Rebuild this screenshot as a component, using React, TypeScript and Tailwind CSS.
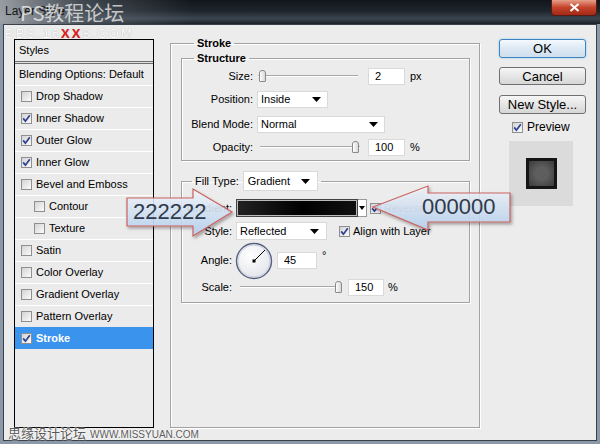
import React from "react";

const F = "font-['Liberation_Sans',Arial,sans-serif]";

function Check({ on }: { on?: boolean }) {
  return (
    <span className="flex h-[11px] w-[11px] shrink-0 items-center justify-center border border-[#8e8f8f] bg-[linear-gradient(135deg,#d4d4d4,#fbfbfb)]">
      {on && (
        <svg width="9" height="9" viewBox="0 0 9 9">
          <path d="M1.2 4.4 L3.4 7.2 L7.8 1.2" stroke="#2c3f91" strokeWidth="1.7" fill="none" />
        </svg>
      )}
    </span>
  );
}

function Caret() {
  return (
    <svg width="9" height="5" viewBox="0 0 9 5">
      <path d="M0 0 H9 L4.5 5 Z" fill="#000" />
    </svg>
  );
}

function Thumb() {
  return <span className="block h-[12px] w-[7px] rounded-t-[3px] rounded-b-[1px] border border-[#8a8a8a] bg-[linear-gradient(90deg,#fdfdfd,#d8d8d8)]" />;
}

const styles = [
  { name: "Drop Shadow" },
  { name: "Inner Shadow", on: true },
  { name: "Outer Glow", on: true },
  { name: "Inner Glow", on: true },
  { name: "Bevel and Emboss" },
  { name: "Contour", sub: true },
  { name: "Texture", sub: true },
  { name: "Satin" },
  { name: "Color Overlay" },
  { name: "Gradient Overlay" },
  { name: "Pattern Overlay" },
];

export default function App() {
  return (
    <div className={`relative h-[444px] w-[600px] overflow-hidden bg-[#8a98a8] text-[11px] leading-[13px] text-black ${F}`}>
      {/* TITLE BAR */}
      <div className="relative h-[24px] bg-[linear-gradient(180deg,#11161c_0%,#1d242c_45%,#3c4650_78%,#1a2027_100%)]">
        <div className="absolute inset-0 bg-[linear-gradient(90deg,rgba(175,180,186,0.85)_0%,rgba(120,128,136,0.45)_14%,rgba(0,0,0,0)_32%)]" />
        <span className="absolute left-[5px] top-[5px] text-[12px] text-[#151515]">Layer Style</span>
        <div className="absolute right-[3px] top-0 flex h-[16px] w-[46px] items-center justify-center rounded-b-[4px] border border-t-0 border-[#5a1a12] bg-[linear-gradient(180deg,#e7a08a,#c5422a_50%,#a12a17)]">
          <svg width="11" height="9" viewBox="0 0 11 9">
            <path d="M1.5 1 L9.5 8 M9.5 1 L1.5 8" stroke="#fff" strokeWidth="2" />
          </svg>
        </div>
      </div>

      {/* BODY */}
      <div className="mx-[3px] flex h-[417px] items-start border border-[#3a4048] bg-[#ececec] pl-[10px] pt-[14px]">
        {/* STYLE LIST */}
        <div className="flex h-[389px] w-[140px] shrink-0 flex-col border border-black bg-[#ebebeb]">
          <div className="flex h-[21px] items-center pl-[4px]">Styles</div>
          <div className="h-[3px] border-y border-[#6d6d6d] bg-[#e0e0e0]" />
          <div className="flex h-[21px] items-center pl-[4px]">Blending Options: Default</div>
          {styles.map((s) => (
            <div
              key={s.name}
              className={`flex h-[22px] items-center gap-[4px] border-t border-white ${s.sub ? "pl-[19px]" : "pl-[6px]"}`}
            >
              <Check on={s.on} />
              <span>{s.name}</span>
            </div>
          ))}
          <div className="flex h-[22px] items-center gap-[4px] bg-[#3a93ec] pl-[6px] font-bold text-white">
            <Check on />
            <span>Stroke</span>
          </div>
        </div>

        {/* STROKE GROUP */}
        <fieldset className="-mt-[2px] ml-[16px] h-[391px] w-[310px] shrink-0 border border-[#a3a3a3] pl-[10px] pr-[9px] shadow-[inset_1px_1px_0_#fff,1px_1px_0_#fff]">
          <legend className="ml-[13px] px-[3px] font-bold">Stroke</legend>

          {/* STRUCTURE */}
          <fieldset className="mt-[2px] border border-[#a3a3a3] pb-[3px] shadow-[inset_1px_1px_0_#fff,1px_1px_0_#fff]">
            <legend className="ml-[12px] px-[3px] font-bold">Structure</legend>

            <div className="flex h-[22px] items-center">
              <span className="w-[71px] text-right">Size:</span>
              <div className="relative ml-[5px] flex h-[12px] w-[100px] items-center">
                <div className="h-[2px] w-full border-b border-white bg-[#a8a8a8]" />
                <span className="absolute left-[1px] top-0"><Thumb /></span>
              </div>
              <span className="ml-[10px] flex h-[17px] w-[37px] items-center border border-[#d9d9d9] bg-white pl-[6px]">2</span>
              <span className="ml-[5px]">px</span>
            </div>

            <div className="flex h-[24px] items-center">
              <span className="w-[71px] text-right">Position:</span>
              <div className="ml-[4px] flex h-[17px] w-[71px] items-center justify-between border border-[#d9d9d9] bg-white pl-[3px] pr-[6px]">
                <span>Inside</span>
                <Caret />
              </div>
            </div>

            <div className="flex h-[26px] items-center">
              <span className="w-[71px] text-right">Blend Mode:</span>
              <div className="ml-[4px] flex h-[17px] w-[128px] items-center justify-between border border-[#d9d9d9] bg-white pl-[3px] pr-[6px]">
                <span>Normal</span>
                <Caret />
              </div>
            </div>

            <div className="flex h-[20px] items-center">
              <span className="w-[71px] text-right">Opacity:</span>
              <div className="relative ml-[7px] flex h-[12px] w-[100px] items-center">
                <div className="h-[2px] w-full border-b border-white bg-[#a8a8a8]" />
                <span className="absolute right-[1px] top-0"><Thumb /></span>
              </div>
              <span className="ml-[8px] flex h-[17px] w-[37px] items-center border border-[#d9d9d9] bg-white pl-[6px]">100</span>
              <span className="ml-[5px]">%</span>
            </div>
          </fieldset>

          {/* FILL TYPE */}
          <fieldset className="mt-[10px] border border-[#a3a3a3] pb-[6px] shadow-[inset_1px_1px_0_#fff,1px_1px_0_#fff]">
            <legend className="ml-[10px] flex items-center px-[3px]">
              <span>Fill Type:</span>
              <span className="ml-[4px] flex h-[20px] w-[75px] items-center justify-between border border-[#d9d9d9] bg-white pl-[4px] pr-[7px]">
                <span>Gradient</span>
                <Caret />
              </span>
            </legend>

            <div className="mt-[6px] flex h-[22px] items-center">
              <span className="w-[50px] text-right">Gradient:</span>
              <div className="ml-[4px] flex h-[18px] items-center">
                <span className="h-[18px] w-[122px] border border-[#444] bg-[linear-gradient(90deg,#222222,#000000_55%,#111111)] shadow-[inset_0_0_0_1px_#bbb]" />
                <span className="flex h-[18px] w-[9px] items-center justify-center border border-l-0 border-[#999] bg-white">
                  <svg width="6" height="4" viewBox="0 0 6 4"><path d="M0 0 H6 L3 4 Z" fill="#000" /></svg>
                </span>
              </div>
              <span className="ml-[3px]"><Check on /></span>
              <span className="ml-[3px] text-[#9a9a9a]">Reverse</span>
            </div>

            <div className="flex h-[24px] items-center">
              <span className="w-[50px] text-right">Style:</span>
              <div className="ml-[4px] flex h-[18px] w-[91px] items-center justify-between border border-[#d9d9d9] bg-white pl-[3px] pr-[7px]">
                <span>Reflected</span>
                <Caret />
              </div>
              <span className="ml-[12px]"><Check on /></span>
              <span className="ml-[3px]">Align with Layer</span>
            </div>

            <div className="flex h-[35px] items-center">
              <span className="w-[50px] text-right">Angle:</span>
              <svg className="ml-[3px]" width="38" height="38" viewBox="0 0 38 38">
                <defs>
                  <radialGradient id="dial" cx="40%" cy="35%" r="70%">
                    <stop offset="0" stopColor="#ffffff" />
                    <stop offset="1" stopColor="#e2e4ea" />
                  </radialGradient>
                </defs>
                <circle cx="19" cy="19" r="17.5" fill="url(#dial)" stroke="#56607e" strokeWidth="1.4" />
                <circle cx="19" cy="19" r="16" fill="none" stroke="#c2c8d8" strokeWidth="0.8" />
                <path d="M19 19 L30 8" stroke="#000" strokeWidth="1" />
                <rect x="17.5" y="17.5" width="3" height="3" fill="#000" />
              </svg>
              <span className="ml-[4px] flex h-[17px] w-[40px] items-center border border-[#d9d9d9] bg-white pl-[6px]">45</span>
              <span className="mb-[10px] ml-[5px]">°</span>
            </div>

            <div className="flex h-[18px] items-center">
              <span className="w-[50px] text-right">Scale:</span>
              <div className="relative ml-[8px] flex h-[12px] w-[102px] items-center">
                <div className="h-[2px] w-full border-b border-white bg-[#a8a8a8]" />
                <span className="absolute right-[0px] top-0"><Thumb /></span>
              </div>
              <span className="ml-[6px] flex h-[17px] w-[36px] items-center border border-[#d9d9d9] bg-white pl-[6px]">150</span>
              <span className="ml-[4px]">%</span>
            </div>
          </fieldset>
        </fieldset>

        {/* BUTTONS */}
        <div className="ml-[19px] flex w-[87px] shrink-0 flex-col text-[13px]">
          <button className="flex h-[19px] items-center justify-center rounded-[3px] border border-[#3c84c0] bg-[linear-gradient(180deg,#f4f9fd,#dde9f4_50%,#cfdfee)] shadow-[0_0_2px_#7fc0ee]">
            OK
          </button>
          <button className="mt-[9px] flex h-[18px] items-center justify-center rounded-[3px] border border-[#707070] bg-[linear-gradient(180deg,#f6f6f6,#e6e6e6_50%,#d6d6d6)]">
            Cancel
          </button>
          <button className="mt-[10px] flex h-[19px] items-center justify-center rounded-[3px] border border-[#707070] bg-[linear-gradient(180deg,#f6f6f6,#e6e6e6_50%,#d6d6d6)]">
            New Style...
          </button>
          <div className="mt-[7px] flex h-[13px] items-center gap-[4px] pl-[13px]">
            <Check on />
            <span className="text-[12px]">Preview</span>
          </div>
          <div className="ml-[10px] mt-[7px] flex h-[65px] w-[64px] items-center justify-center bg-[#dbdbdb]">
            <div className="h-[31px] w-[31px] border-[3px] border-[#151515] bg-[radial-gradient(circle,#5e5e5e_35%,#3a3a3a_100%)]" />
          </div>
        </div>
      </div>

      {/* WATERMARKS */}
      <div className="absolute left-[20px] top-[1px] font-['Noto_Sans_CJK_SC',sans-serif] text-[20px] leading-[24px] text-white/70">PS教程论坛</div>
      <div className="absolute left-[5px] top-[27px] text-[13px] leading-[14px] tracking-[2px] text-white [text-shadow:0_0_1px_#999]">
        BBS.16<span className="font-bold text-[#e21f1f]">XX</span>8.COM
      </div>
      <div className="absolute left-[8px] top-[424px] flex items-end text-[#5a5a5a] [text-shadow:0_0_2px_#fff,0_0_1px_#fff]">
        <span className="font-['Noto_Sans_CJK_SC',sans-serif] text-[13px] leading-[17px]">思缘设计论坛</span>
        <span className="ml-[4px] text-[10px] leading-[13px]">WWW.MISSYUAN.COM</span>
      </div>

      {/* ANNOTATION ARROWS */}
      <div className="absolute left-[124px] top-[185px] h-[56px] w-[116px]">
        <svg className="absolute inset-0" width="116" height="56" viewBox="0 0 116 56">
          <defs>
            <linearGradient id="ab" x1="0" y1="0" x2="0" y2="1">
              <stop offset="0" stopColor="#f6f9fd" stopOpacity="0.85" />
              <stop offset="1" stopColor="#b4d0ef" stopOpacity="0.9" />
            </linearGradient>
            <filter id="sh" x="-10%" y="-10%" width="130%" height="140%">
              <feDropShadow dx="1.5" dy="2" stdDeviation="1.5" floodColor="#000" floodOpacity="0.35" />
            </filter>
          </defs>
          <path d="M3 13 H69 V4 L108 27 L69 51 V41 H3 Z" fill="url(#ab)" stroke="#c9625f" strokeWidth="1.2" filter="url(#sh)" />
        </svg>
        <span className="absolute left-[9px] top-[13px] text-[22px] leading-[28px] text-[#2f3a4a]">222222</span>
      </div>

      <div className="absolute left-[370px] top-[182px] h-[54px] w-[146px]">
        <svg className="absolute inset-0" width="146" height="54" viewBox="0 0 146 54">
          <defs>
            <linearGradient id="ab2" x1="0" y1="0" x2="0" y2="1">
              <stop offset="0" stopColor="#f6f9fd" stopOpacity="0.75" />
              <stop offset="1" stopColor="#b4d0ef" stopOpacity="0.9" />
            </linearGradient>
            <filter id="sh2" x="-10%" y="-10%" width="130%" height="140%">
              <feDropShadow dx="1.5" dy="2" stdDeviation="1.5" floodColor="#000" floodOpacity="0.35" />
            </filter>
          </defs>
          <path d="M3 25 L58 4 V11 H140 V40 H58 V48 Z" fill="url(#ab2)" stroke="#c9625f" strokeWidth="1.2" filter="url(#sh2)" />
        </svg>
        <span className="absolute left-[52px] top-[11px] text-[22px] leading-[28px] text-[#2f3a4a]">000000</span>
      </div>
    </div>
  );
}
